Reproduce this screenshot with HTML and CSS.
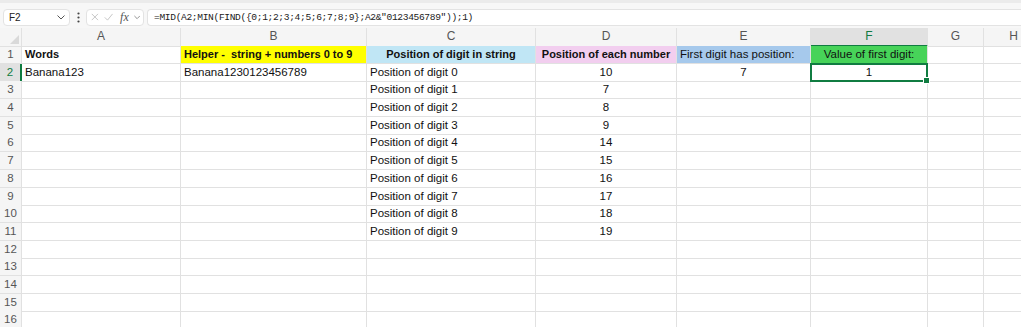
FILE: index.html
```html
<!DOCTYPE html>
<html lang="en">
<head>
    <meta charset="UTF-8">
    <title>Sheet</title>
    <link rel="stylesheet" href="styles.css">
</head>
<body>
    <div class="toolbar">
        <div class="namebox">
            <span>F2</span>
            <svg class="chev" width="8" height="5" viewBox="0 0 8 5"><path d="M0.5 0.5 L4 4 L7.5 0.5" fill="none" stroke="#555" stroke-width="1"/></svg>
        </div>
        <svg class="dots" width="3" height="11" viewBox="0 0 3 11"><circle cx="1.5" cy="1.5" r="1.1" fill="#444"/><circle cx="1.5" cy="5.5" r="1.1" fill="#444"/><circle cx="1.5" cy="9.5" r="1.1" fill="#444"/></svg>
        <div class="fxbox">
            <svg width="10" height="10" viewBox="0 0 10 10"><path d="M1 1 L9 9 M9 1 L1 9" stroke="#bdbdbd" stroke-width="1.1"/></svg>
            <svg width="12" height="10" viewBox="0 0 12 10"><path d="M1 5.5 L4.5 9 L11 1" fill="none" stroke="#bdbdbd" stroke-width="1.1"/></svg>
            <span class="fx">fx</span>
            <svg class="chev" width="8" height="5" viewBox="0 0 8 5"><path d="M0.5 0.5 L4 4 L7.5 0.5" fill="none" stroke="#777" stroke-width="1"/></svg>
        </div>
        <div class="formula">=MID(A2;MIN(FIND({0;1;2;3;4;5;6;7;8;9};A2&amp;"0123456789"));1)</div>
    </div>

    <div class="sheet">
        <div class="row head">
            <div class="corner"><span class="tri"></span></div>
            <div class="ch">A</div><div class="ch">B</div><div class="ch">C</div><div class="ch">D</div>
            <div class="ch">E</div><div class="ch sel-col">F</div><div class="ch">G</div><div class="ch">H</div>
        </div>
        <div class="row">
            <div class="rh">1</div>
            <div class="c b">Words</div>
            <div class="c b yellow">Helper -&nbsp; string + numbers 0 to 9</div>
            <div class="c b mid cyan">Position of digit in string</div>
            <div class="c b mid pink">Position of each number</div>
            <div class="c blue">First digit has position:</div>
            <div class="c mid green">Value of first digit:</div>
            <div class="c"></div><div class="c"></div>
        </div>
        <div class="row">
            <div class="rh sel-row">2</div>
            <div class="c">Banana123</div>
            <div class="c">Banana1230123456789</div>
            <div class="c">Position of digit 0</div>
            <div class="c mid">10</div>
            <div class="c mid">7</div>
            <div class="c mid active">1<span class="handle"></span></div>
            <div class="c"></div><div class="c"></div>
        </div>
        <div class="row"><div class="rh">3</div><div class="c"></div><div class="c"></div><div class="c">Position of digit 1</div><div class="c mid">7</div><div class="c"></div><div class="c"></div><div class="c"></div><div class="c"></div></div>
        <div class="row"><div class="rh">4</div><div class="c"></div><div class="c"></div><div class="c">Position of digit 2</div><div class="c mid">8</div><div class="c"></div><div class="c"></div><div class="c"></div><div class="c"></div></div>
        <div class="row"><div class="rh">5</div><div class="c"></div><div class="c"></div><div class="c">Position of digit 3</div><div class="c mid">9</div><div class="c"></div><div class="c"></div><div class="c"></div><div class="c"></div></div>
        <div class="row"><div class="rh">6</div><div class="c"></div><div class="c"></div><div class="c">Position of digit 4</div><div class="c mid">14</div><div class="c"></div><div class="c"></div><div class="c"></div><div class="c"></div></div>
        <div class="row"><div class="rh">7</div><div class="c"></div><div class="c"></div><div class="c">Position of digit 5</div><div class="c mid">15</div><div class="c"></div><div class="c"></div><div class="c"></div><div class="c"></div></div>
        <div class="row"><div class="rh">8</div><div class="c"></div><div class="c"></div><div class="c">Position of digit 6</div><div class="c mid">16</div><div class="c"></div><div class="c"></div><div class="c"></div><div class="c"></div></div>
        <div class="row"><div class="rh">9</div><div class="c"></div><div class="c"></div><div class="c">Position of digit 7</div><div class="c mid">17</div><div class="c"></div><div class="c"></div><div class="c"></div><div class="c"></div></div>
        <div class="row"><div class="rh">10</div><div class="c"></div><div class="c"></div><div class="c">Position of digit 8</div><div class="c mid">18</div><div class="c"></div><div class="c"></div><div class="c"></div><div class="c"></div></div>
        <div class="row"><div class="rh">11</div><div class="c"></div><div class="c"></div><div class="c">Position of digit 9</div><div class="c mid">19</div><div class="c"></div><div class="c"></div><div class="c"></div><div class="c"></div></div>
        <div class="row"><div class="rh">12</div><div class="c"></div><div class="c"></div><div class="c"></div><div class="c"></div><div class="c"></div><div class="c"></div><div class="c"></div><div class="c"></div></div>
        <div class="row"><div class="rh">13</div><div class="c"></div><div class="c"></div><div class="c"></div><div class="c"></div><div class="c"></div><div class="c"></div><div class="c"></div><div class="c"></div></div>
        <div class="row"><div class="rh">14</div><div class="c"></div><div class="c"></div><div class="c"></div><div class="c"></div><div class="c"></div><div class="c"></div><div class="c"></div><div class="c"></div></div>
        <div class="row"><div class="rh">15</div><div class="c"></div><div class="c"></div><div class="c"></div><div class="c"></div><div class="c"></div><div class="c"></div><div class="c"></div><div class="c"></div></div>
        <div class="row"><div class="rh">16</div><div class="c"></div><div class="c"></div><div class="c"></div><div class="c"></div><div class="c"></div><div class="c"></div><div class="c"></div><div class="c"></div></div>
    </div>
</body>
</html>
```

FILE: styles.css
```css
body {
    margin: 0;
    font-family: "Liberation Sans", Arial, sans-serif;
    background-color: #fff;
    overflow: hidden;
    width: 1021px;
    height: 327px;
}

.toolbar {
    display: flex;
    align-items: center;
    padding: 3px 0 0 3px;
    background-color: #f7f7f7;
    border-top: 3px solid #ebebeb;
    box-sizing: border-box;
    height: 28px;
}

.namebox {
    display: flex;
    align-items: center;
    justify-content: space-between;
    width: 67px;
    height: 17px;
    padding: 0 4px 0 5px;
    box-sizing: border-box;
    background-color: #fff;
    border: 1px solid #e3e3e3;
    border-radius: 4px;
    font-size: 10px;
    color: #222;
}

.dots {
    margin: 0 6px 0 7px;
}

.fxbox {
    display: flex;
    align-items: center;
    gap: 5px;
    width: 58px;
    height: 17px;
    padding: 0 3px 0 4px;
    box-sizing: border-box;
    background-color: #fff;
    border: 1px solid #e3e3e3;
    border-radius: 4px;
}

.fx {
    font-family: "Liberation Serif", serif;
    font-style: italic;
    font-size: 12px;
    color: #555;
    margin-left: 2px;
}

.formula {
    flex: 1;
    height: 17px;
    margin-left: 3px;
    padding-left: 6px;
    box-sizing: border-box;
    background-color: #fff;
    border: 1px solid #e3e3e3;
    border-right: none;
    border-radius: 4px 0 0 4px;
    font-family: "Liberation Mono", monospace;
    font-size: 9.6px;
    letter-spacing: -0.35px;
    line-height: 15px;
    color: #1a1a1a;
    white-space: nowrap;
}

.sheet {
    --cols: 22px 159px 186px 169px 141px 134px 117px 56px 60px;
}

.row {
    display: grid;
    grid-template-columns: var(--cols);
    height: 17.7px;
}

.row.head {
    height: 18px;
}

.row > div {
    box-sizing: border-box;
    border-right: 1px solid #e1e1e1;
    border-bottom: 1px solid #e1e1e1;
    white-space: nowrap;
}

.corner {
    position: relative;
    background-color: #f5f5f5;
}

.tri {
    position: absolute;
    right: 2px;
    bottom: 2px;
    width: 0;
    height: 0;
    border-left: 9px solid transparent;
    border-bottom: 9px solid #d9d9d9;
}

.ch {
    background-color: #f5f5f5;
    text-align: center;
    font-size: 12px;
    line-height: 17px;
    color: #555;
}

.ch.sel-col {
    background-color: #e1e1e1;
    border-bottom: 2px solid #107c41 !important;
    color: #107c41;
}

.rh {
    background-color: #f5f5f5;
    text-align: center;
    font-size: 11.5px;
    line-height: 17px;
    color: #555;
}

.rh.sel-row {
    background-color: #e1e1e1;
    border-right: 2px solid #107c41 !important;
    color: #107c41;
}

.c {
    padding-left: 3px;
    font-size: 11.5px;
    line-height: 17px;
    color: #111;
}

.c.b {
    font-weight: bold;
    font-size: 11px;
}

.c.mid {
    text-align: center;
    padding-left: 0;
}

.yellow { background-color: #ffff00; }
.cyan { background-color: #c0e6f5; }
.pink { background-color: #f2ceef; }
.blue { background-color: #a6c9ec; }
.green { background-color: #47d359; }

.active {
    position: relative;
}

.active::after {
    content: "";
    position: absolute;
    left: -1px;
    top: -1px;
    right: -1px;
    bottom: -1px;
    border: 2px solid #107c41;
}

.handle {
    position: absolute;
    right: -3px;
    bottom: -3px;
    width: 5px;
    height: 5px;
    background-color: #107c41;
    border: 1px solid #fff;
    z-index: 2;
}
```
